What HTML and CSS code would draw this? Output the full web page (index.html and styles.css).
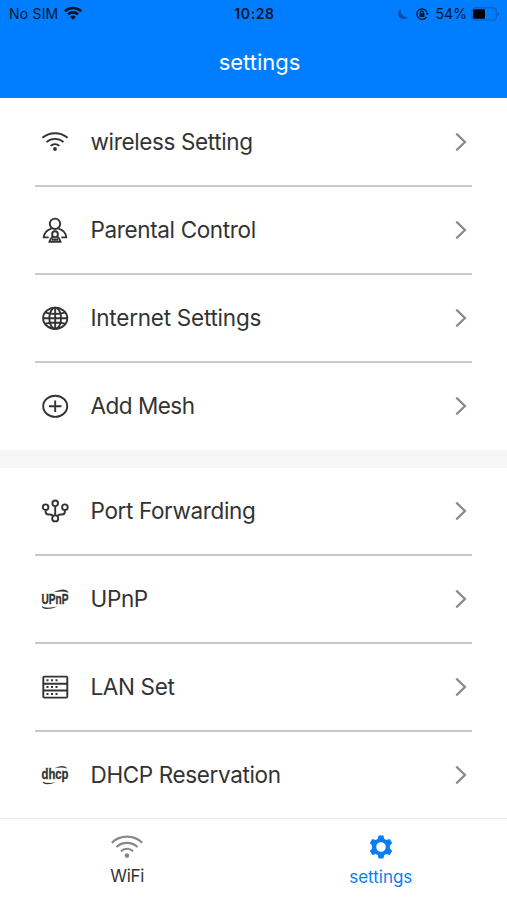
FILE: index.html
```html
<!DOCTYPE html>
<html lang="en">
<head>
<meta charset="utf-8">
<title>settings</title>
<link rel="stylesheet" href="styles.css">
</head>
<body>
<div class="screen">
  <header class="header">
    <div class="status">
      <div class="status-left">
        <span class="carrier">No SIM</span>
        <svg class="status-wifi" width="18" height="14" viewBox="0 0 18 14" fill="none" stroke="#06152c" stroke-width="2.6"><path d="M.9 5.200a11.700 11.700 0 0 1 16.200 0M3.900 8.400a7.400 7.400 0 0 1 10.200 0"/><path d="M9 13.800 6.100 10.900a4.200 4.200 0 0 1 5.800 0z" fill="#06152c" stroke="none"/></svg>
      </div>
      <span class="clock">10:28</span>
      <div class="status-right">
        <svg class="moon" width="12" height="14" viewBox="0 0 12 14"><path d="M3.800 1.900A5.500 5.500 0 1 0 11 9.900Q6.600 10.600 4.900 7.600 3.200 4.900 3.800 1.900z" fill="#064fa5"/></svg>
        <svg class="lock" width="14" height="14" viewBox="0 0 14 14" fill="none" stroke="#06152c" stroke-width="1.3"><path d="M11.900 5.300A5.200 5.200 0 1 0 11.500 9.800"/><path d="M10.700 5.900h2.900L12.400 8.400z" fill="#06152c" stroke="none"/><rect x="4.400" y="6.300" width="5" height="3.700" rx=".5" fill="#06152c" stroke="none"/><path d="M5.400 6.500V5.400a1.500 1.500 0 0 1 3 0v1.100"/></svg>
        <span class="percent">54%</span>
        <svg class="battery" width="29" height="14" viewBox="0 0 29 14"><rect x=".8" y=".8" width="24.400" height="12.200" rx="3" fill="none" stroke="#0560c4" stroke-width="1.200"/><rect x="2" y="2.300" width="12" height="9.400" rx="1.200" fill="#000"/><path d="M26.600 4.800v4.400q1.700-.7 1.700-2.200t-1.700-2.200z" fill="#0560c4"/></svg>
      </div>
    </div>
    <h1 class="title">settings</h1>
  </header>
  <main class="content">
    <section class="group">
      <a class="row">
        <svg class="icon" viewBox="0 0 30 30"><path d="M2.400 10.800a19.500 19.500 0 0 1 25.200 0M6.500 15a13.100 13.100 0 0 1 17 0M10.600 18.900a6.800 6.800 0 0 1 8.800 0"/><circle cx="15" cy="22" r="1.900" class="solid"/></svg>
        <span class="label">wireless Setting</span>
        <svg class="chevron" viewBox="0 0 12 20"><path d="M1.300 1.600 10 10 1.300 18.400"/></svg>
      </a>
      <a class="row">
        <svg class="icon" viewBox="0 0 30 30"><circle cx="15" cy="8.800" r="5.200"/><path d="M11.500 13.600C6.800 15 4 18.300 3.700 22.400h5M18.500 13.600c4.700 1.400 7.500 4.700 7.800 8.800h-5"/><circle cx="15" cy="19.200" r="2.900"/><path d="M12.800 21.500C11 22.800 10 24.400 9.500 26.800h11c-.5-2.400-1.500-4-3.300-5.300M12 24.500h6"/></svg>
        <span class="label">Parental Control</span>
        <svg class="chevron" viewBox="0 0 12 20"><path d="M1.300 1.600 10 10 1.300 18.400"/></svg>
      </a>
      <a class="row">
        <svg class="icon" viewBox="0 0 30 30"><ellipse cx="15.200" cy="15.200" rx="12.100" ry="10.600"/><ellipse cx="15.200" cy="15.200" rx="5.900" ry="10.600"/><path d="M15.200 4.600v21.200M3.200 15.200h24M5.500 9.700q9.700 2.500 19.400 0M5.500 20.700q9.700-2.500 19.400 0"/></svg>
        <span class="label internet">Internet Settings</span>
        <svg class="chevron" viewBox="0 0 12 20"><path d="M1.300 1.600 10 10 1.300 18.400"/></svg>
      </a>
      <a class="row">
        <svg class="icon" viewBox="0 0 30 30"><ellipse cx="15.200" cy="15.300" rx="12" ry="10.600"/><path d="M8.900 15.300h12.600M15.200 9.600v11.400"/></svg>
        <span class="label mesh">Add Mesh</span>
        <svg class="chevron" viewBox="0 0 12 20"><path d="M1.300 1.600 10 10 1.300 18.400"/></svg>
      </a>
    </section>
    <section class="group">
      <a class="row">
        <svg class="icon" viewBox="0 0 30 30"><circle cx="15.200" cy="7.300" r="2.800"/><circle cx="5.600" cy="11.200" r="2.800"/><circle cx="24.900" cy="11.200" r="2.800"/><circle cx="15.200" cy="22.400" r="3"/><path d="M15.200 10.100v9.300M5.600 14v1.500q0 3 3 3h1.400q2.200 0 3.100 1.900M24.900 14v1.500q0 3-3 3h-1.400q-2.200 0-3.100 1.900"/></svg>
        <span class="label">Port Forwarding</span>
        <svg class="chevron" viewBox="0 0 12 20"><path d="M1.300 1.600 10 10 1.300 18.400"/></svg>
      </a>
      <a class="row">
        <svg class="icon" viewBox="0 0 30 30"><path class="solid" d="M13.500 8.300Q24 3.200 28 7.400q.4.900 0 1.400-4-2.500-14.500-.5zM18 22.500Q6 27 2.300 23.500q-.6-.9-.2-1.500Q5 25 18 22.500z"/><text class="logo" x="1.500" y="20.300" textLength="27" lengthAdjust="spacingAndGlyphs">UPnP</text></svg>
        <span class="label">UPnP</span>
        <svg class="chevron" viewBox="0 0 12 20"><path d="M1.300 1.600 10 10 1.300 18.400"/></svg>
      </a>
      <a class="row">
        <svg class="icon" viewBox="0 0 30 30"><rect x="3.300" y="4.600" width="24" height="21" rx="1"/><path d="M3.300 11.700h24M3.300 18.500h24"/><path class="dots" d="M6.500 8.200h13M6.500 15.100h13M6.500 22h13"/></svg>
        <span class="label">LAN Set</span>
        <svg class="chevron" viewBox="0 0 12 20"><path d="M1.300 1.600 10 10 1.300 18.400"/></svg>
      </a>
      <a class="row">
        <svg class="icon" viewBox="0 0 30 30"><path class="solid" d="M14.500 8.300Q23 4 26.500 7.400q.5.700.1 1.200Q22.500 6.500 14.500 8.300zM16 22.300Q7 26 3 23q-.6-.7-.1-1.300Q7 24 16 22.300z"/><text class="logo" x="1.500" y="19.200" textLength="27" lengthAdjust="spacingAndGlyphs">dhcp</text></svg>
        <span class="label">DHCP Reservation</span>
        <svg class="chevron" viewBox="0 0 12 20"><path d="M1.300 1.600 10 10 1.300 18.400"/></svg>
      </a>
    </section>
  </main>
  <nav class="tabs">
    <a class="tab">
      <svg width="34" height="28" viewBox="0 0 34 28" fill="none" stroke="#85878c" stroke-width="2.100"><path d="M1.800 9.700a22 22 0 0 1 30.400 0M6.400 14.100a15.500 15.500 0 0 1 21.200 0M10.900 18.200a9 9 0 0 1 12.200 0"/><circle cx="17" cy="22.600" r="2.300" fill="#85878c" stroke="none"/></svg>
      <span class="wifi-label">WiFi</span>
    </a>
    <a class="tab active">
      <svg width="34" height="28" viewBox="0 0 34 28"><path fill="#0a7df5" fill-rule="evenodd" d="M14.600 2.600h4.800l.8 3.200 2 1.200 3.500-1.100 2.500 4.200-2.300 2.500v2.800l2.300 2.500-2.500 4.200-3.500-1.100-2 1.200-.8 3.200h-4.800l-.8-3.200-2-1.200-3.500 1.100-2.500-4.200 2.300-2.500v-2.800l-2.300-2.500 2.500-4.200 3.500 1.100 2-1.200zM17 9.200a4.800 4.800 0 1 0 0 9.600 4.800 4.800 0 0 0 0-9.600z"/></svg>
      <span class="settings-label">settings</span>
    </a>
  </nav>
</div>
</body>
</html>
```
FILE: styles.css
```css
* { box-sizing: border-box; }
body {
  margin: 0;
  background: #fff;
  color: #333;
  font-family: Inter, "Liberation Sans", sans-serif;
}
svg { display: block; flex: none; }
.screen {
  display: flex;
  flex-direction: column;
  width: 507px;
  height: 900px;
  overflow: hidden;
}
.header {
  height: 98px;
  flex: none;
  background: #007eff;
}
.status {
  display: grid;
  grid-template-columns: 1fr auto 1fr;
  align-items: center;
  height: 27px;
  padding: 0 7px 0 9px;
  font-size: 14px;
  color: #06152c;
}
.status-left, .status-right { display: flex; align-items: center; }
.status-right { justify-content: flex-end; }
.carrier { letter-spacing: .2px; }
.status-wifi { margin: -2px 0 0 6px; }
.clock { font-weight: 600; letter-spacing: .6px; }
.moon { margin-right: -1px; }
.lock { margin: 0 6px 0 7px; }
.percent { letter-spacing: .1px; }
.battery { margin-left: 4px; }
.title {
  margin: 20px 0 0;
  padding-left: 12px;
  text-align: center;
  font-size: 22px;
  line-height: 30px;
  font-weight: 400;
  color: #fff;
}
.content {
  flex: none;
  height: 720px;
  padding-top: 1px;
  overflow: hidden;
}
.group { padding: 0 35px; }
.group + .group { border-top: 18px solid #f6f6f6; }
.row {
  display: flex;
  align-items: center;
  height: 88px;
  padding: 0 5px;
  border-bottom: 2px solid #c9c9c9;
}
.row:last-child {
  height: 87px;
  padding-top: 1px;
  border-bottom-color: transparent;
}
.icon {
  width: 30px;
  height: 30px;
  fill: none;
  stroke: #333;
  stroke-width: 1.9;
  overflow: visible;
}
.icon .solid { fill: #333; stroke: none; }
.icon .dots { stroke-width: 2; stroke-dasharray: 2 2.5; }
.logo {
  font: 700 14px "Liberation Sans", sans-serif;
  fill: #333;
  stroke: #333;
  stroke-width: .35;
}
.label {
  flex: 1;
  margin-left: 20.5px;
  font-size: 22.5px;
  line-height: 32px;
  letter-spacing: -.36px;
  white-space: nowrap;
}
.internet { letter-spacing: -.24px; }
.mesh { letter-spacing: -.5px; }
.chevron {
  width: 12px;
  height: 20px;
  fill: none;
  stroke: #8a8a8a;
  stroke-width: 2.2;
}
.tabs {
  display: flex;
  height: 82px;
  border-top: 1px solid #ececec;
}
.tab {
  flex: 1;
  display: flex;
  flex-direction: column;
  align-items: center;
  padding: 14px 0 0 1px;
  font-size: 17px;
  line-height: 30px;
}
.wifi-label { letter-spacing: -.3px; }
.settings-label { padding-top: 1px; }
.active { color: #0a7df5; }
```
